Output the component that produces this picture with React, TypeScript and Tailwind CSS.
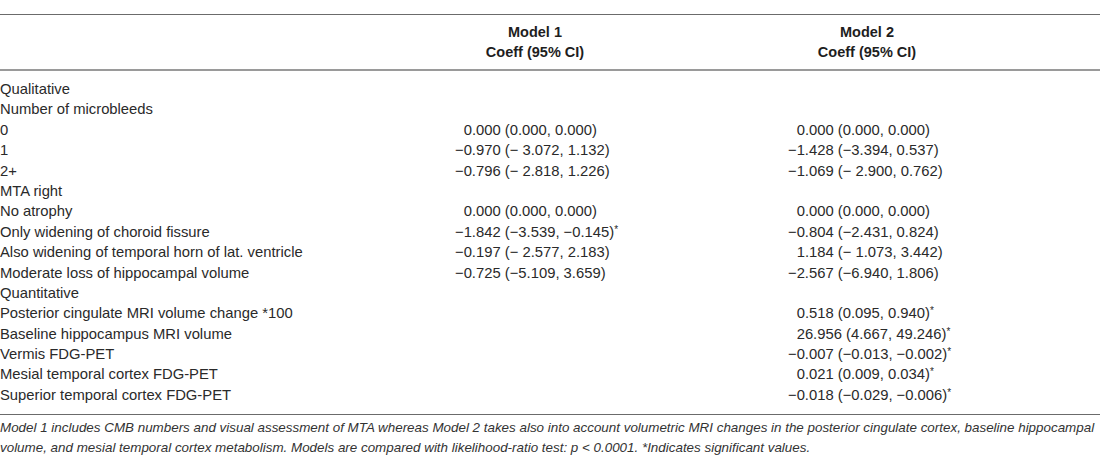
const rows: { label: string; m1?: string; m2?: string; star1?: boolean; star2?: boolean }[] = [
  { label: 'Qualitative' },
  { label: 'Number of microbleeds' },
  { label: '0', m1: '0.000 (0.000, 0.000)', m2: '0.000 (0.000, 0.000)' },
  { label: '1', m1: '−0.970 (− 3.072, 1.132)', m2: '−1.428 (−3.394, 0.537)' },
  { label: '2+', m1: '−0.796 (− 2.818, 1.226)', m2: '−1.069 (− 2.900, 0.762)' },
  { label: 'MTA right' },
  { label: 'No atrophy', m1: '0.000 (0.000, 0.000)', m2: '0.000 (0.000, 0.000)' },
  { label: 'Only widening of choroid fissure', m1: '−1.842 (−3.539, −0.145)', star1: true, m2: '−0.804 (−2.431, 0.824)' },
  { label: 'Also widening of temporal horn of lat. ventricle', m1: '−0.197 (− 2.577, 2.183)', m2: '1.184 (− 1.073, 3.442)' },
  { label: 'Moderate loss of hippocampal volume', m1: '−0.725 (−5.109, 3.659)', m2: '−2.567 (−6.940, 1.806)' },
  { label: 'Quantitative' },
  { label: 'Posterior cingulate MRI volume change *100', m2: '0.518 (0.095, 0.940)', star2: true },
  { label: 'Baseline hippocampus MRI volume', m2: '26.956 (4.667, 49.246)', star2: true },
  { label: 'Vermis FDG-PET', m2: '−0.007 (−0.013, −0.002)', star2: true },
  { label: 'Mesial temporal cortex FDG-PET', m2: '0.021 (0.009, 0.034)', star2: true },
  { label: 'Superior temporal cortex FDG-PET', m2: '−0.018 (−0.029, −0.006)', star2: true },
]

function Value({ text, star }: { text?: string; star?: boolean }) {
  if (!text) return <span />
  return (
    <span className="whitespace-pre">
      {/* keep positives lined up with the minus sign */}
      {!text.startsWith('−') && <span className="invisible">−</span>}
      {text}
      {star && <span className="relative -top-[4px] text-[10px]">*</span>}
    </span>
  )
}

export default function App() {
  return (
    <div
      className="w-[1100px] h-[455px] bg-white text-[#2a2a2a] pt-[14px] overflow-hidden"
      style={{ fontFamily: '"Liberation Sans", Arial, sans-serif' }}
    >
      <div className="border-t border-[#6b6b6b]" />

      {/* Header */}
      <div className="grid grid-cols-[400px_270px_394px_1fr] pt-[7px] pb-[7px] text-[14.5px] leading-[20px] font-bold text-[#1e1e1e]">
        <div />
        <div className="text-center">
          Model 1
          <br />
          Coeff (95% CI)
        </div>
        <div className="text-center">
          Model 2
          <br />
          Coeff (95% CI)
        </div>
        <div />
      </div>

      <div className="border-t-2 border-[#9a9a9a]" />

      {/* Body */}
      <div className="pt-[8px] pb-[9px] text-[14.8px]">
        {rows.map((r, i) => (
          <div key={i} className="grid grid-cols-[400px_270px_394px_1fr] h-[20.4px] leading-[20.4px]">
            <div className="whitespace-nowrap">{r.label}</div>
            <div className="pl-[55px]">
              <Value text={r.m1} star={r.star1} />
            </div>
            <div className="pl-[118px]">
              <Value text={r.m2} star={r.star2} />
            </div>
            <div />
          </div>
        ))}
      </div>

      <div className="border-t border-[#6b6b6b]" />

      {/* Footnote */}
      <p className="pt-[3px] text-[13.4px] leading-[20px] italic text-[#333] whitespace-nowrap">
        Model 1 includes CMB numbers and visual assessment of MTA whereas Model 2 takes also into account volumetric MRI changes in the posterior cingulate cortex, baseline hippocampal
        <br />
        volume, and mesial temporal cortex metabolism. Models are compared with likelihood-ratio test: p &lt; 0.0001. *Indicates significant values.
      </p>
    </div>
  )
}
